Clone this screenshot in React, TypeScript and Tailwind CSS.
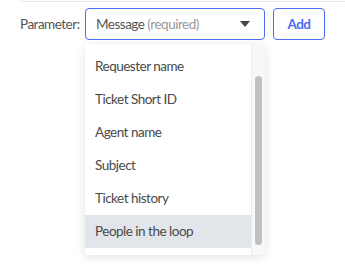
const OPTIONS = [
  "Requester name",
  "Ticket Short ID",
  "Agent name",
  "Subject",
  "Ticket history",
  "People in the loop",
];

export default function App() {
  return (
    <div className="h-[269px] w-[345px] overflow-hidden bg-white font-['Lato',sans-serif] text-[13.5px] tracking-[-0.5px]">
      {/* bottom edge of the previous block */}
      <div className="ml-[20px] flex h-[2px]">
        <div className="w-[32px] rounded-bl-sm border-b border-l border-gray-200" />
        <div className="flex-1 border-b border-l border-gray-200" />
      </div>
      <div className="mt-[6px] flex items-center pl-[20px]">
        <span className="w-[65px] text-[#555]">Parameter:</span>
        <div className="relative">
          <button className="flex h-[32px] w-[180px] items-center justify-between rounded border border-[#4a6cf7] bg-white pl-[10px] pr-[14px] text-[#555]">
            <span>
              Message <span className="text-[#999]">(required)</span>
            </span>
            <svg width="10" height="6" viewBox="0 0 10 6">
              <path d="M0 0h10L5 6z" fill="#444" />
            </svg>
          </button>
          <div className="absolute left-0 top-[36px] w-[180px] rounded bg-white shadow-[0_2px_10px_rgba(0,0,0,0.12)]">
            <div className="flex h-[211px] py-[6px]">
              <ul className="flex-1">
                {OPTIONS.map((o, i) => (
                  <li
                    key={o}
                    className={
                      "flex h-[33px] items-center pl-[10px] text-[#4a4a4a] " +
                      (i === OPTIONS.length - 1 ? "bg-[#e2e6ea]" : "")
                    }
                  >
                    {o}
                  </li>
                ))}
              </ul>
              <div className="-my-[6px] flex w-[14px] border-l border-[#ececec] bg-[#f8f8f8] px-[3px] pb-[10px] pt-[32px]">
                <div className="w-full rounded-full bg-[#c1c1c1]" />
              </div>
            </div>
          </div>
        </div>
        <button className="ml-[8px] h-[32px] w-[52px] rounded border border-[#4a6cf7] font-bold text-[#4a6cf7]">
          Add
        </button>
      </div>
    </div>
  );
}
